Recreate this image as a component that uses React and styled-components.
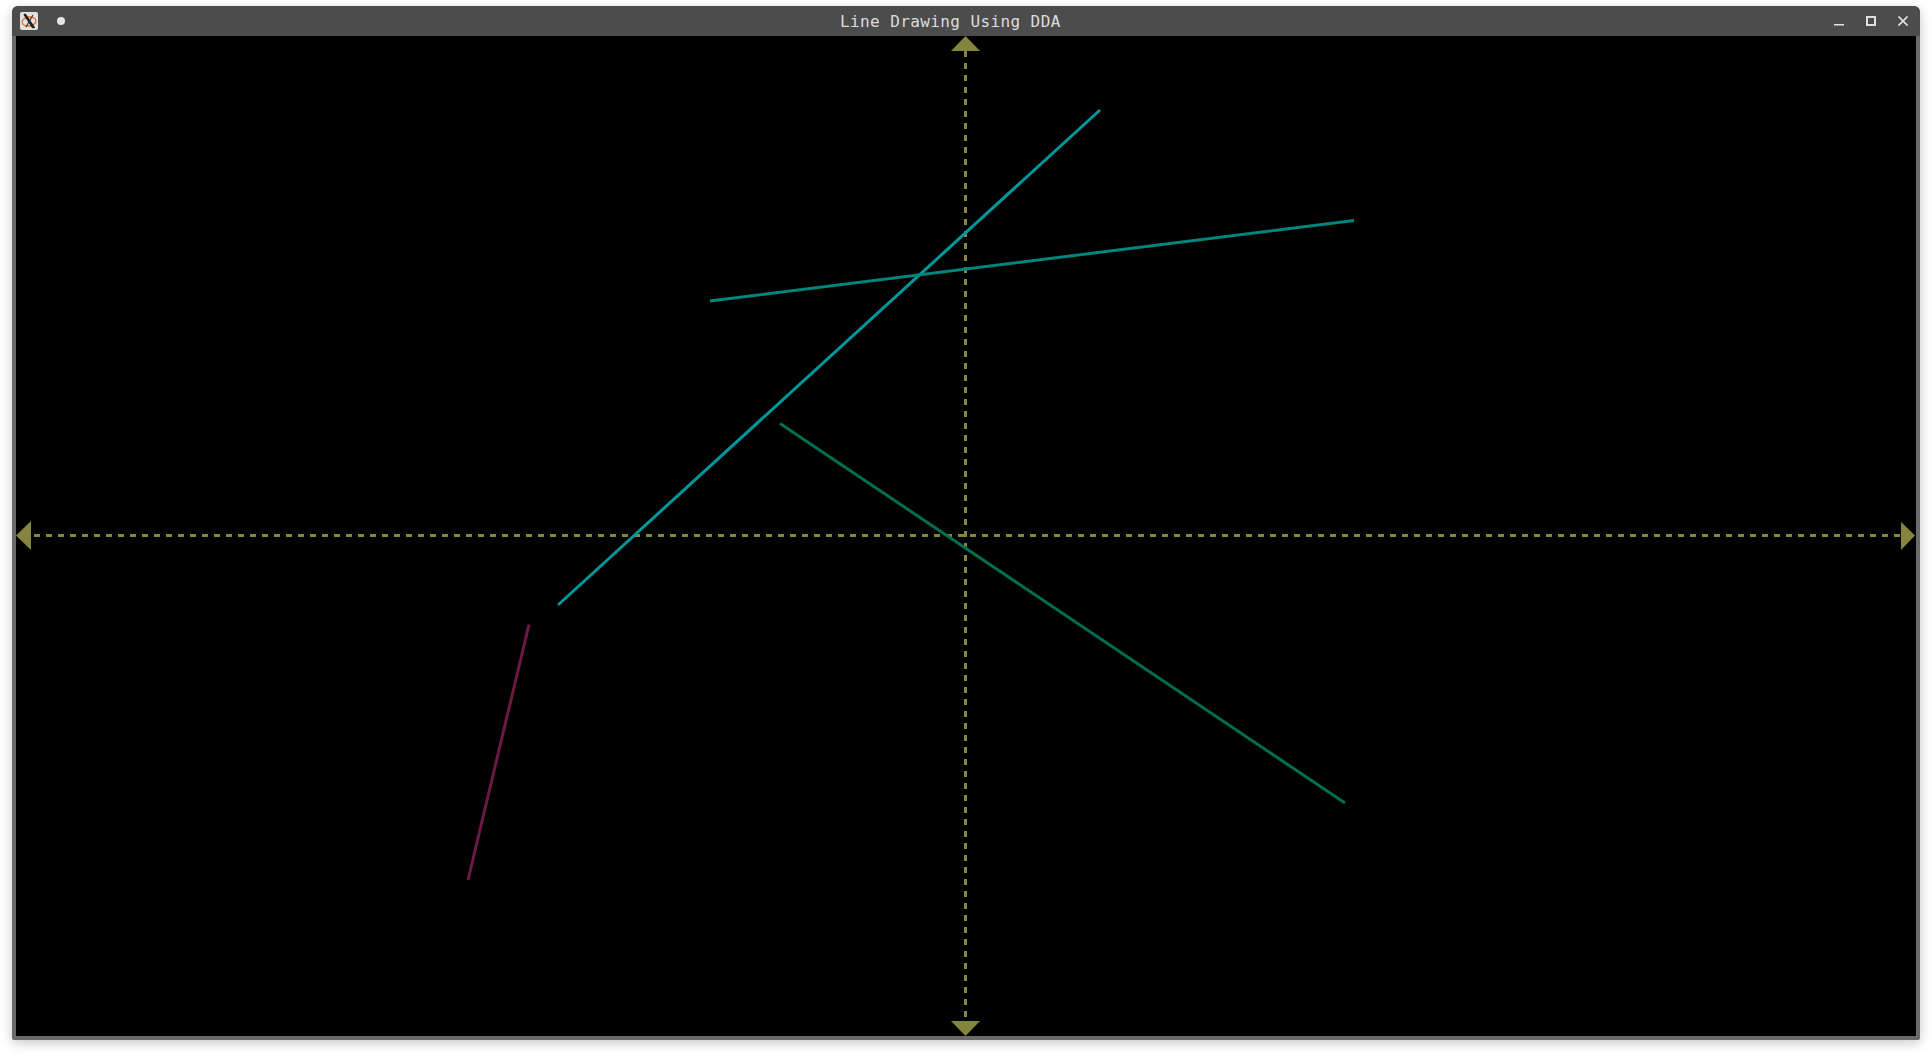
import React from "react";
import styled, { createGlobalStyle } from "styled-components";

const Global = createGlobalStyle`
  html, body { margin: 0; padding: 0; background: #fff; overflow: hidden; }
  body { width: 1932px; height: 1056px; }
`;

const Desktop = styled.div`
  width: 1932px;
  height: 1056px;
  padding: 6px 12px 16px 12px;
  box-sizing: border-box;
`;

const Window = styled.div`
  height: 1034px;
  display: flex;
  flex-direction: column;
  background: #6a6a6a;
  border-radius: 6px 6px 2px 2px;
  box-shadow: 0 3px 12px rgba(0, 0, 0, 0.22);
  overflow: hidden;
`;

const TitleBar = styled.div`
  height: 30px;
  flex: none;
  display: grid;
  grid-template-columns: 820px auto 1fr;
  align-items: center;
  background: #4c4c4c;
  padding: 0 12px 0 8px;
`;

const LeftGroup = styled.div`
  display: flex;
  align-items: center;
  gap: 19px;
`;

const AppIcon = styled.div`
  width: 18px;
  height: 18px;
  background: #dfe3e3;
  border-radius: 2px;
  display: flex;
`;

const StickyDot = styled.span`
  width: 8px;
  height: 8px;
  border-radius: 50%;
  background: #e6e6e6;
`;

const Title = styled.div`
  font-family: "DejaVu Sans Mono", "Liberation Mono", monospace;
  font-size: 16px;
  letter-spacing: 0.4px;
  color: #dcdcdc;
  white-space: nowrap;
  padding-top: 1px;
`;

const Controls = styled.div`
  display: flex;
  justify-content: flex-end;
  align-items: center;
  gap: 22px;
`;

const ControlIcon = styled.svg`
  width: 10px;
  height: 10px;
  display: block;
  fill: none;
  stroke: #e0e0e0;
`;

const Canvas = styled.svg`
  display: block;
  flex: none;
  width: 1900px;
  height: 1000px;
  margin: 0 4px;
  background: #000;
`;

const axis = "#85853f";

// coordinates are relative to the graphics canvas (origin at 16,36 on screen)
const lines = [
  { x1: 542, y1: 569, x2: 1084, y2: 74, color: "#00979c" },
  { x1: 694, y1: 265, x2: 1338, y2: 184.5, color: "#00857c" },
  { x1: 764, y1: 387.5, x2: 1329, y2: 767, color: "#006e4f" },
  { x1: 513, y1: 588.5, x2: 452, y2: 844, color: "#6b1a45" },
];

export default function App() {
  return (
    <>
      <Global />
      <Desktop>
        <Window>
          <TitleBar>
            <LeftGroup>
              <AppIcon>
                <svg width="18" height="18" viewBox="0 0 18 18">
                  <ellipse cx="9" cy="9.5" rx="7" ry="4.5" fill="none" stroke="#e8742a" strokeWidth="1.4" transform="rotate(-8 9 9.5)" />
                  <path d="M4 2 L13 16 M5 2 L14.500 16" stroke="#222" strokeWidth="1.6" />
                  <path d="M13 3 L6 15" stroke="#333" strokeWidth="1.1" />
                </svg>
              </AppIcon>
              <StickyDot />
            </LeftGroup>
            <Title>Line Drawing Using DDA</Title>
            <Controls>
              <ControlIcon viewBox="0 0 10 10">
                <path d="M0 8.750 H10" strokeWidth="1.500" />
              </ControlIcon>
              <ControlIcon viewBox="0 0 10 10">
                <rect x="1" y="1" width="8" height="8" strokeWidth="2" />
              </ControlIcon>
              <ControlIcon viewBox="0 0 10 10">
                <path d="M0.500 0.500 L9.500 9.500 M9.500 0.500 L0.500 9.500" strokeWidth="1.700" />
              </ControlIcon>
            </Controls>
          </TitleBar>
          <Canvas viewBox="0 0 1900 1000">
            <g stroke={axis} strokeWidth="3" strokeDasharray="6 6" shapeRendering="crispEdges">
              <line x1="18" y1="499.500" x2="1885" y2="499.500" />
              <line x1="949.500" y1="15" x2="949.500" y2="985" />
            </g>
            <g fill={axis}>
              <polygon points="0,499.500 15,485 15,514" />
              <polygon points="1899,499.500 1885,486 1885,514" />
              <polygon points="949.500,0 935,15 964,15" />
              <polygon points="949.500,1000 935,985 964,985" />
            </g>
            {lines.map((l) => (
              <line key={l.color} x1={l.x1} y1={l.y1} x2={l.x2} y2={l.y2} stroke={l.color} strokeWidth="3" />
            ))}
          </Canvas>
        </Window>
      </Desktop>
    </>
  );
}
